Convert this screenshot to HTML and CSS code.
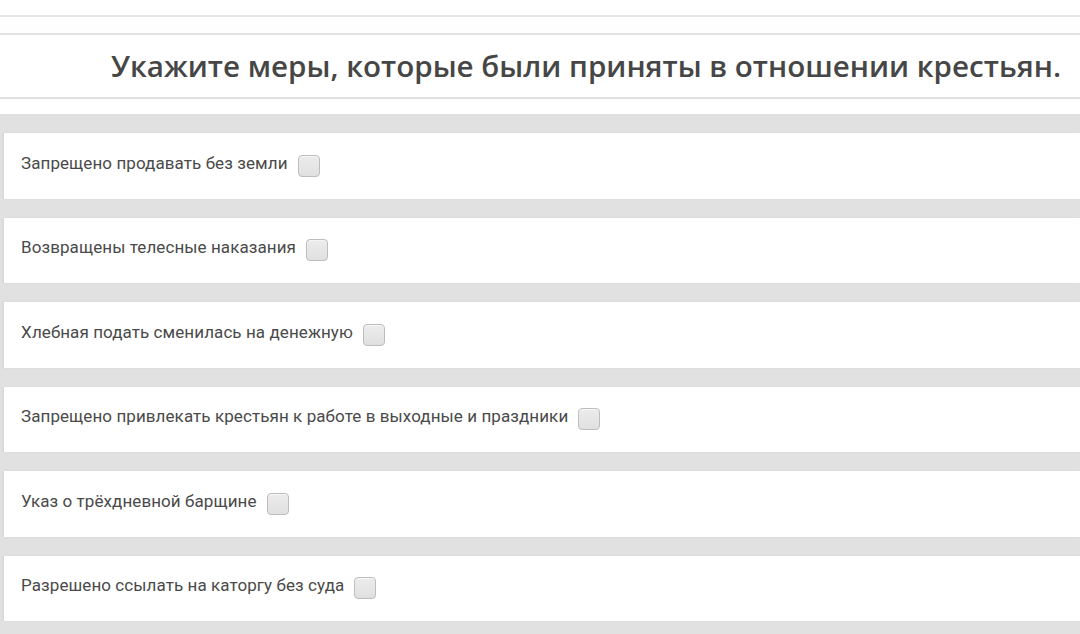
FILE: index.html
```html
<!DOCTYPE html>
<html lang="ru">
<head>
<meta charset="utf-8">
<link rel="stylesheet" href="styles.css">
</head>
<body>
<div class="top"></div>
<div class="strip"></div>
<div class="heading"><h1>Укажите меры, которые были приняты в отношении крестьян.</h1></div>
<div class="spacer"></div>
<div class="list">
  <label class="item"><span>Запрещено продавать без земли</span><i class="cb"></i></label>
  <label class="item"><span>Возвращены телесные наказания</span><i class="cb"></i></label>
  <label class="item"><span>Хлебная подать сменилась на денежную</span><i class="cb"></i></label>
  <label class="item"><span>Запрещено привлекать крестьян к работе в выходные и праздники</span><i class="cb"></i></label>
  <label class="item"><span>Указ о трёхдневной барщине</span><i class="cb"></i></label>
  <label class="item"><span>Разрешено ссылать на каторгу без суда</span><i class="cb"></i></label>
</div>
</body>
</html>
```
FILE: styles.css
```css
html, body { margin: 0; padding: 0; background: #fff; overflow: hidden; }
body { width: 1080px; height: 634px; font-family: Roboto, "Noto Sans", sans-serif; }
.top { height: 15px; border-bottom: 2px solid #e6e6e6; }
.strip { height: 16px; border-bottom: 2px solid #e3e3e3; background: #fefefe; }
.heading { height: 62px; border-bottom: 2px solid #e0e0e0; display: flex; align-items: center; justify-content: flex-end; padding-right: 19px; }
.heading h1 { margin: 0 0 2px; font-family: "Open Sans", sans-serif; font-weight: 600; font-size: 29.6px; color: #464646; letter-spacing: 0; }
.spacer { height: 15px; }
.list { background: #e1e1e1; padding: 19px 0 16px 4px; display: flex; flex-direction: column; gap: 19px; }
.item { background: #fff; height: 65.5px; display: flex; align-items: center; padding-left: 17px; box-shadow: -1px 0 2px rgba(0,0,0,0.06); }
.item span { font-size: 17px; color: #4a4a4a; letter-spacing: 0.08px; margin-top: -6px; }
.cb { display: inline-block; width: 20px; height: 20px; margin-left: 10px; border: 1px solid #bdbdbd; border-radius: 4px; background: linear-gradient(#ececec, #e0e0e0); box-shadow: inset 0 1px 1px rgba(255,255,255,0.6); }
```
